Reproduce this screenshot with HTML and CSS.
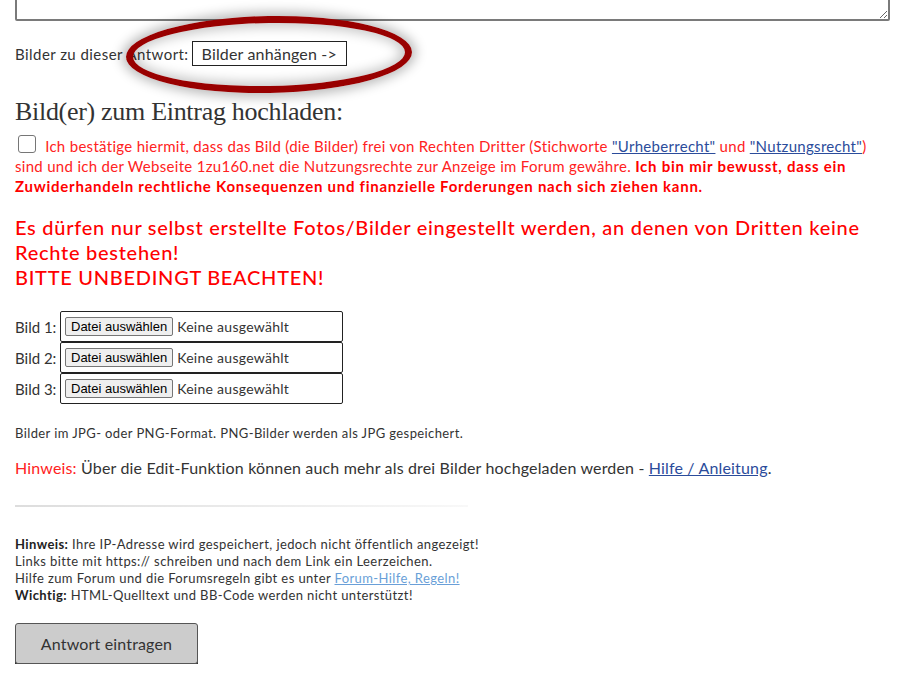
FILE: index.html
```html
<!DOCTYPE html>
<html lang="de">
<head>
  <meta charset="UTF-8">
  <title>Antwort schreiben</title>
  <link rel="stylesheet" href="styles.css">
</head>
<body>
  <div class="page">
    <textarea class="answer"></textarea>

    <div class="attach">
      <span class="attach-label">Bilder zu dieser Antwort:</span>
      <button class="attach-btn">Bilder anhängen -&gt;</button>
      <!-- marker drawn over the button -->
      <div class="marker"></div>
    </div>

    <h2 class="upload-title">Bild(er) zum Eintrag hochladen:</h2>

    <div class="confirm">
      <span class="check"></span>
      Ich bestätige hiermit, dass das Bild (die Bilder) frei von Rechten Dritter (Stichworte <a href="#">"Urheberrecht"</a> und <a href="#">"Nutzungsrecht"</a>)<br>sind und ich der Webseite 1zu160.net die Nutzungsrechte zur Anzeige im Forum gewähre. <b>Ich bin mir bewusst, dass ein<br>Zuwiderhandeln rechtliche Konsequenzen und finanzielle Forderungen nach sich ziehen kann.</b>
    </div>

    <p class="warning">Es dürfen nur selbst erstellte Fotos/Bilder eingestellt werden, an denen von Dritten keine Rechte bestehen!<br>BITTE UNBEDINGT BEACHTEN!</p>

    <div class="files">
      <div class="file-row">
        <span class="file-label">Bild 1:</span>
        <span class="file-box"><span class="file-btn">Datei auswählen</span>Keine ausgewählt</span>
      </div>
      <div class="file-row">
        <span class="file-label">Bild 2:</span>
        <span class="file-box"><span class="file-btn">Datei auswählen</span>Keine ausgewählt</span>
      </div>
      <div class="file-row">
        <span class="file-label">Bild 3:</span>
        <span class="file-box"><span class="file-btn">Datei auswählen</span>Keine ausgewählt</span>
      </div>
    </div>

    <p class="format">Bilder im JPG- oder PNG-Format. PNG-Bilder werden als JPG gespeichert.</p>

    <p class="hint"><span class="red">Hinweis:</span> Über die Edit-Funktion können auch mehr als drei Bilder hochgeladen werden - <a href="#">Hilfe / Anleitung</a>.</p>

    <hr class="sep">

    <p class="notes">
      <b>Hinweis:</b> Ihre IP-Adresse wird gespeichert, jedoch nicht öffentlich angezeigt!<br>
      Links bitte mit https:// schreiben und nach dem Link ein Leerzeichen.<br>
      Hilfe zum Forum und die Forumsregeln gibt es unter <a href="#">Forum-Hilfe, Regeln!</a><br>
      <b>Wichtig:</b> HTML-Quelltext und BB-Code werden nicht unterstützt!
    </p>

    <button class="submit">Antwort eintragen</button>
  </div>
</body>
</html>
```

FILE: styles.css
```css
body {
  margin: 0;
  font-family: Lato, "Open Sans", sans-serif;
  letter-spacing: 0.025em;
  color: #333;
  background: #fff;
  overflow: hidden;
}

.page {
  padding: 0 15px;
}

.answer {
  display: block;
  box-sizing: border-box;
  width: 875px;
  height: 140px;
  margin-top: -119px;
  border: 2px solid #7a7a7a;
  border-radius: 2px;
}

/* Bilder anhaengen */
.attach {
  position: relative;
  margin-top: 20px;
  display: flex;
  align-items: center;
  font-size: 15px;
}

.attach-label {
  letter-spacing: 0.03em;
}

.attach-btn {
  margin-left: 3px;
  height: 25px;
  padding: 0 9px;
  border: 1px solid #222;
  background: #fff;
  font-family: inherit;
  letter-spacing: 0.01em;
  font-size: 16px;
  color: #333;
}

.marker {
  position: absolute;
  left: 111px;
  top: -25px;
  width: 272px;
  height: 63px;
  border: 7px solid #990000;
  border-radius: 50%;
  box-shadow: 0 0 12px 4px rgba(0, 0, 0, 0.28), inset 0 0 12px 4px rgba(0, 0, 0, 0.22);
  transform: rotate(-1deg);
}

.upload-title {
  margin: 31px 0 0;
  font-family: "Liberation Serif", serif;
  font-weight: normal;
  font-size: 26px;
  line-height: 30px;
  letter-spacing: -0.3px;
  color: #333;
}

.confirm {
  margin-top: 8px;
  font-size: 15px;
  line-height: 20px;
  letter-spacing: 0.02em;
  white-space: nowrap;
  color: #f22;
}

.confirm b {
  color: #f00;
  letter-spacing: 0.05em;
}

.check {
  display: inline-block;
  width: 16px;
  height: 16px;
  margin: 0 5px 0 3px;
  border: 1px solid #767676;
  border-radius: 3px;
  vertical-align: -1px;
}

.confirm a {
  color: #2b4c9b;
}

.warning {
  margin: 19px 0 0;
  font-size: 20px;
  line-height: 25px;
  font-weight: 500;
  letter-spacing: 0.036em;
  color: #f00;
}

.files {
  margin-top: 21px;
}

.file-row {
  display: flex;
  align-items: center;
  font-size: 15px;
}

.file-label {
  flex: 0 0 45px;
  white-space: nowrap;
  letter-spacing: 0;
}

.file-box {
  display: flex;
  align-items: center;
  box-sizing: border-box;
  width: 283px;
  height: 31px;
  padding: 0 4px;
  border: 1px solid #222;
  border-radius: 2px;
  font-size: 14px;
  letter-spacing: 0.02em;
}

.file-btn {
  margin-right: 4px;
  padding: 1px 5px;
  border: 1px solid #767676;
  border-radius: 2px;
  background: #efefef;
  font-family: Arial, "Liberation Sans", sans-serif;
  font-size: 13px;
  letter-spacing: 0;
  color: #000;
}

.format {
  margin: 21px 0 0;
  font-size: 13px;
}

.hint {
  margin: 17px 0 0;
  font-size: 16px;
  letter-spacing: 0.01em;
}

.hint .red {
  color: #f22;
}

.hint a {
  color: #2b4c9b;
}

.sep {
  width: 453px;
  margin: 28px 0 0;
  height: 2px;
  border: 0;
  background: linear-gradient(to right, #ddd, #f8f8f8);
}

.notes {
  margin: 29px 0 0;
  font-size: 13px;
  line-height: 17px;
}

.notes b {
  color: #222;
}

.notes a {
  color: #6a9fd8;
}

.submit {
  display: block;
  margin-top: 19px;
  width: 183px;
  height: 41px;
  border: 1px solid #555;
  border-radius: 3px;
  background: #ccc;
  box-shadow: 0 2px 0 #333;
  font-family: inherit;
  letter-spacing: 0.01em;
  font-size: 16px;
  color: #333;
}
```
